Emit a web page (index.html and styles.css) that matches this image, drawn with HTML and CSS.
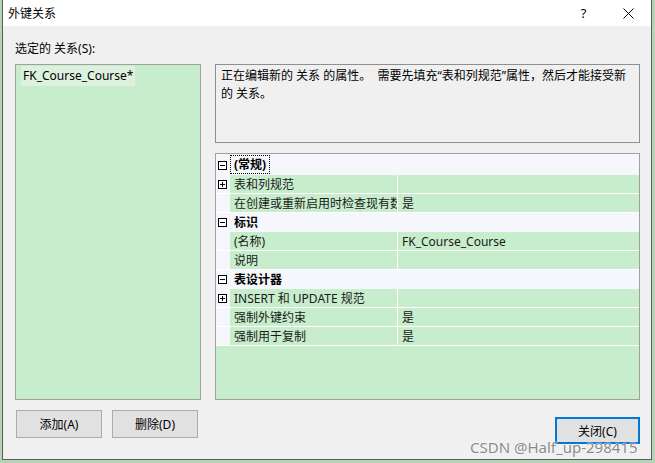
FILE: index.html
```
<html>
<head>
    <meta charset="utf-8">
    <title>外键关系</title>
    <link rel="stylesheet" href="styles.css">
</head>
<body>
    <div class="window">
        <div class="titlebar">
            <span class="title">外键关系</span>
            <span class="tb-btn help">?</span>
            <span class="tb-btn">
                <svg width="11" height="11" viewBox="0 0 11 11"><path d="M0.5 0.5L10.5 10.5M10.5 0.5L0.5 10.5" stroke="#000" stroke-width="1" fill="none"/></svg>
            </span>
        </div>
        <div class="dialog-body">
            <div class="main">
                <div class="left-col">
                    <div class="label">选定的 关系(S):</div>
                    <div class="rel-list">
                        <div class="rel-item">FK_Course_Course*</div>
                    </div>
                </div>
                <div class="right-col">
                    <div class="desc">正在编辑新的 关系 的属性。  需要先填充“表和列规范”属性，然后才能接受新<br>的 关系。</div>
                    <div class="prop-grid">
                        <div class="pg-row cat first">
                            <span class="pg-margin"><svg width="9" height="9"><rect x=".5" y=".5" width="8" height="8" fill="#fff" stroke="#000"/><path d="M2 4.5h5" stroke="#000"/></svg></span>
                            <span class="pg-cat-name focus">(常规)</span>
                        </div>
                        <div class="pg-row">
                            <span class="pg-margin"><svg width="9" height="9"><rect x=".5" y=".5" width="8" height="8" fill="#fff" stroke="#000"/><path d="M2 4.5h5M4.5 2v5" stroke="#000"/></svg></span>
                            <span class="pg-name">表和列规范</span>
                            <span class="pg-value"></span>
                        </div>
                        <div class="pg-row">
                            <span class="pg-margin"></span>
                            <span class="pg-name">在创建或重新启用时检查现有数据</span>
                            <span class="pg-value">是</span>
                        </div>
                        <div class="pg-row cat">
                            <span class="pg-margin"><svg width="9" height="9"><rect x=".5" y=".5" width="8" height="8" fill="#fff" stroke="#000"/><path d="M2 4.5h5" stroke="#000"/></svg></span>
                            <span class="pg-cat-name">标识</span>
                        </div>
                        <div class="pg-row">
                            <span class="pg-margin"></span>
                            <span class="pg-name">(名称)</span>
                            <span class="pg-value">FK_Course_Course</span>
                        </div>
                        <div class="pg-row">
                            <span class="pg-margin"></span>
                            <span class="pg-name">说明</span>
                            <span class="pg-value"></span>
                        </div>
                        <div class="pg-row cat">
                            <span class="pg-margin"><svg width="9" height="9"><rect x=".5" y=".5" width="8" height="8" fill="#fff" stroke="#000"/><path d="M2 4.5h5" stroke="#000"/></svg></span>
                            <span class="pg-cat-name">表设计器</span>
                        </div>
                        <div class="pg-row">
                            <span class="pg-margin"><svg width="9" height="9"><rect x=".5" y=".5" width="8" height="8" fill="#fff" stroke="#000"/><path d="M2 4.5h5M4.5 2v5" stroke="#000"/></svg></span>
                            <span class="pg-name">INSERT 和 UPDATE 规范</span>
                            <span class="pg-value"></span>
                        </div>
                        <div class="pg-row">
                            <span class="pg-margin"></span>
                            <span class="pg-name">强制外键约束</span>
                            <span class="pg-value">是</span>
                        </div>
                        <div class="pg-row">
                            <span class="pg-margin"></span>
                            <span class="pg-name">强制用于复制</span>
                            <span class="pg-value">是</span>
                        </div>
                    </div>
                </div>
            </div>
            <div class="buttons">
                <button class="btn">添加(A)</button>
                <button class="btn">删除(D)</button>
                <button class="btn btn-default">关闭(C)</button>
            </div>
        </div>
        <div class="watermark">CSDN @Half_up-298415</div>
    </div>
</body>
</html>
```

FILE: styles.css
```
body{
    margin: 0;
    background: #b7d3b7;
    font-family: "Noto Sans", "Noto Sans CJK SC", sans-serif;
    font-size: 12px;
    color: #000;
}

.window{
    position: relative;
    width: 650px;
    height: 460px;
    margin-left: 2px;
    box-sizing: border-box;
    border: 1px solid #5b5b5b;
    border-top: none;
    background: #f0f0f0;
    display: flex;
    flex-direction: column;
}

.titlebar{
    height: 26px;
    background: #fff;
    display: flex;
    align-items: center;
}

.title{
    padding-left: 5px;
    flex: 1;
}

.tb-btn{
    width: 45px;
    height: 26px;
    display: flex;
    align-items: center;
    justify-content: center;
}

.help{
    font-size: 13px;
}

.dialog-body{
    flex: 1;
    display: flex;
    flex-direction: column;
    padding: 14px 0 0 12px;
}

.main{
    display: flex;
    gap: 14px;
}

.left-col{
    width: 186px;
}

.label{
    line-height: 18px;
    margin-bottom: 6px;
}

.rel-list{
    height: 336px;
    box-sizing: border-box;
    border: 1px solid #a0a0a0;
    background: #c7edcc;
    padding: 1px 5px;
}

.rel-item{
    display: inline-block;
    line-height: 20px;
    padding: 0 2px;
    background: #dcf1de;
}

.right-col{
    width: 425px;
    padding-top: 24px;
}

.desc{
    height: 79px;
    box-sizing: border-box;
    border: 1px solid #8f8f8f;
    padding: 2px 5px;
    line-height: 18px;
    margin-bottom: 10px;
    white-space: pre;
}

.prop-grid{
    height: 247px;
    box-sizing: border-box;
    border: 1px solid #a0a0a0;
    background: #c7edcc;
}

.pg-row{
    display: flex;
    height: 19px;
    box-sizing: border-box;
    border-bottom: 1px solid #fff;
    line-height: 18px;
}

.pg-row > span{
    padding-top: 1px;
    box-sizing: border-box;
}

.pg-row.cat{
    background: #f5f7fc;
    border-bottom-color: #f5f7fc;
}

.pg-row.first{
    height: 21px;
    padding-top: 1px;
}

.pg-margin{
    width: 14px;
    flex: none;
    background: #f5f7fc;
    display: flex;
    align-items: center;
    padding-left: 2px;
}

.pg-cat-name{
    font-weight: bold;
    padding-left: 4px;
}

.pg-row > .pg-cat-name.focus{
    padding: 0 3px;
    height: 19px;
    line-height: 17px;
    border: 1px dotted #000;
}

.pg-name{
    width: 168px;
    flex: none;
    border-right: 1px solid #fff;
    padding-left: 4px;
    white-space: nowrap;
    overflow: hidden;
    color: #1a1a1a;
}

.pg-value{
    flex: 1;
    padding-left: 4px;
    color: #1a1a1a;
}

.buttons{
    display: flex;
    align-items: flex-start;
    margin-top: 10px;
    padding-left: 1px;
    padding-right: 11px;
    gap: 10px;
}

.btn{
    width: 86px;
    height: 28px;
    border: 1px solid #adadad;
    background: #e1e1e1;
    font-family: "Noto Sans", "Noto Sans CJK SC", sans-serif;
    font-size: 12px;
    color: #000;
    padding: 0;
}

.btn-default{
    margin-left: auto;
    margin-top: 7px;
    width: 85px;
    height: 27px;
    border: 2px solid #0078d7;
}

.watermark{
    position: absolute;
    left: 467px;
    top: 437px;
    font-size: 15px;
    color: #8a8a8a;
    text-shadow: 0 0 2px #fff, 0 0 1px #fff;
    white-space: nowrap;
}
```
